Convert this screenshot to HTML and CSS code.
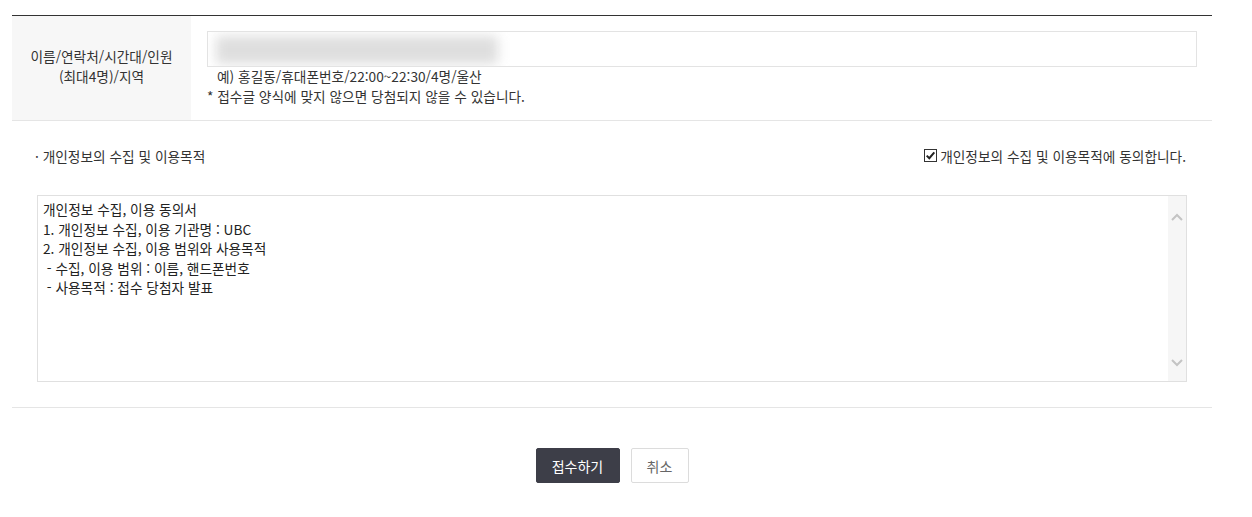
FILE: index.html
```html
<!DOCTYPE html>
<html lang="ko">
<head>
<meta charset="utf-8">
<link rel="stylesheet" href="styles.css">
</head>
<body>
<div class="wrap">
  <div class="form-row">
    <div class="label">이름/연락처/시간대/인원<br>(최대4명)/지역</div>
    <div class="field">
      <div class="input"><span class="blur"></span></div>
      <p class="example">예) 홍길동/휴대폰번호/22:00~22:30/4명/울산</p>
      <p class="note">* 접수글 양식에 맞지 않으면 당첨되지 않을 수 있습니다.</p>
    </div>
  </div>

  <div class="agree">
    <div class="agree-head">
      <span class="agree-title">· 개인정보의 수집 및 이용목적</span>
      <label class="agree-check">
        <svg class="box" width="13" height="13" viewBox="0 0 13 13"><rect x="0.5" y="0.5" width="12" height="12" fill="#fff" stroke="#333"/><path d="M2.7 6.6 L5.3 9.2 L10.3 3.4" fill="none" stroke="#222" stroke-width="2"/></svg>
        개인정보의 수집 및 이용목적에 동의합니다.
      </label>
    </div>
    <div class="terms">
      <div class="terms-text">개인정보 수집, 이용 동의서
1. 개인정보 수집, 이용 기관명 : UBC
2. 개인정보 수집, 이용 범위와 사용목적
 - 수집, 이용 범위 : 이름, 핸드폰번호
 - 사용목적 : 접수 당첨자 발표</div>
      <div class="scroll">
        <svg width="12" height="8" viewBox="0 0 12 8"><path d="M1 7 L6 2 L11 7" fill="none" stroke="#c4c4c4" stroke-width="2"/></svg>
        <svg width="12" height="8" viewBox="0 0 12 8"><path d="M1 1 L6 6 L11 1" fill="none" stroke="#c4c4c4" stroke-width="2"/></svg>
      </div>
    </div>
  </div>

  <div class="buttons">
    <button class="btn btn-primary">접수하기</button>
    <button class="btn btn-cancel">취소</button>
  </div>
</div>
</body>
</html>
```
FILE: styles.css
```css
* { box-sizing: border-box; }
body {
  margin: 0;
  background: #fff;
  font-family: "Noto Sans CJK KR", "Noto Sans", sans-serif;
  font-size: 13.7px;
  color: #333;
}
.wrap {
  width: 1200px;
  margin-left: 12px;
  padding-top: 15px;
}
.form-row {
  display: flex;
  border-top: 1px solid #333;
  border-bottom: 1px solid #e5e5e5;
}
.label {
  width: 179px;
  flex: none;
  background: #f7f7f7;
  display: flex;
  align-items: center;
  justify-content: center;
  text-align: center;
  line-height: 20px;
  padding-bottom: 4px;
}
.field {
  flex: 1;
  padding: 15px 15px 14px 16px;
}
.input {
  height: 36px;
  border: 1px solid #e3e3e3;
  position: relative;
  overflow: hidden;
}
.blur {
  position: absolute;
  left: 8px;
  top: 4px;
  width: 282px;
  height: 28px;
  background: #dedede;
  filter: blur(6px);
}
.example, .note {
  margin: 0;
  line-height: 20px;
}
.example { padding-left: 10px; margin-top: -1px; }
.agree {
  padding: 25px;
  border-bottom: 1px solid #e5e5e5;
}
.agree-head {
  display: flex;
  justify-content: space-between;
  align-items: center;
  line-height: 20px;
  padding-right: 1px;
}
.agree-title { margin-left: -2px; }
.agree-check {
  display: flex;
  align-items: center;
  gap: 3px;
}
.agree-check .box { margin-top: -1px; }
.terms {
  margin-top: 29px;
  height: 187px;
  border: 1px solid #e0e0e0;
  display: flex;
}
.terms-text {
  flex: 1;
  white-space: pre-wrap;
  line-height: 19.5px;
  padding: 4px 5px;
  color: #222;
}
.scroll {
  width: 18px;
  background: #f6f6f6;
  display: flex;
  flex-direction: column;
  justify-content: space-between;
  align-items: center;
  padding: 17px 0 14px;
}
.buttons {
  display: flex;
  justify-content: center;
  gap: 11px;
  padding-top: 40px;
}
.btn {
  font-family: inherit;
  height: 35px;
  font-size: 14px;
  border-radius: 2px;
  cursor: pointer;
}
.btn-primary {
  background: #3d3e48;
  border: 1px solid #3d3e48;
  color: #fff;
  width: 84px;
}
.btn-cancel {
  background: #fff;
  border: 1px solid #dcdcdc;
  color: #666;
  width: 58px;
}
```
